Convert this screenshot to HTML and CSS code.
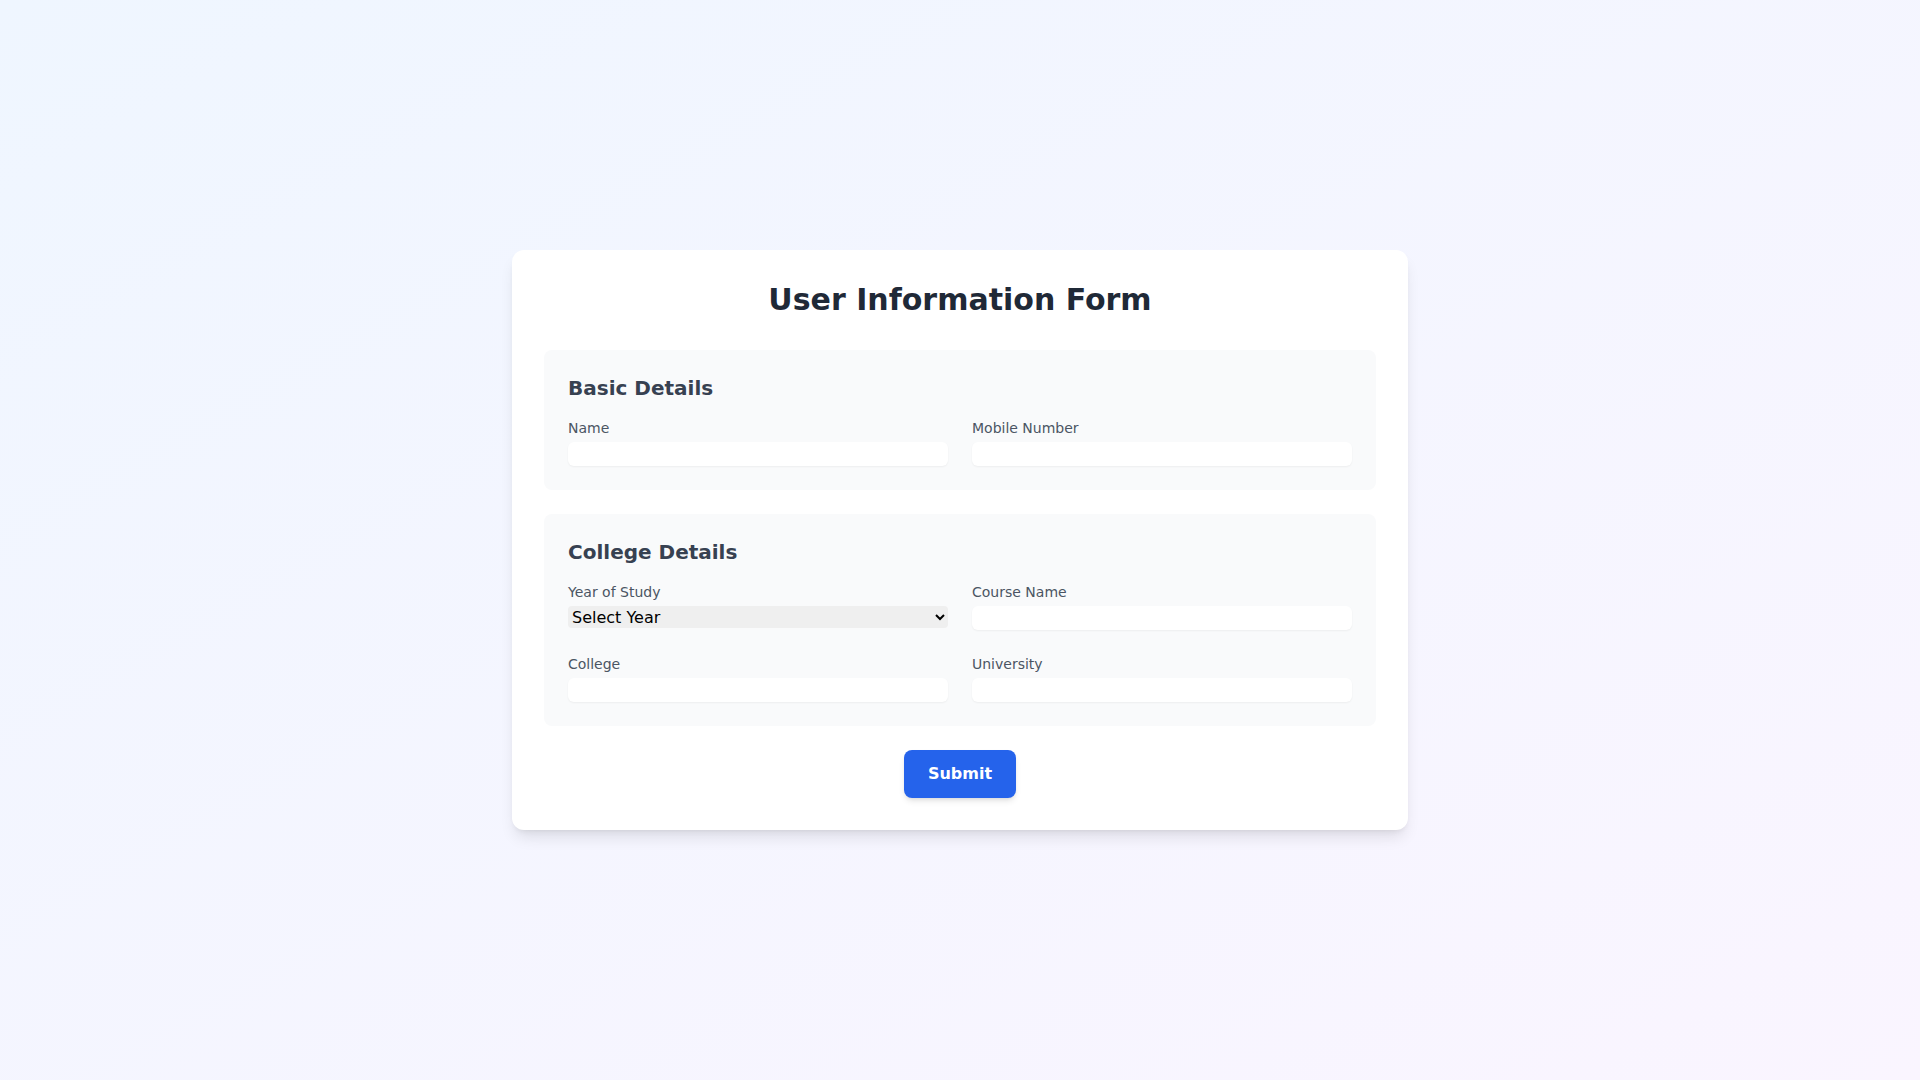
FILE: index.html
```html
<!DOCTYPE html>
<html lang="en">
<head>
<meta charset="utf-8">
<title>User Information Form</title>
<link rel="stylesheet" href="styles.css">
</head>
<body>
<main class="page">
  <form class="card">
    <h1 class="title">User Information Form</h1>
    <section class="section">
      <h2 class="section-title">Basic Details</h2>
      <div class="grid">
        <div class="field">
          <label class="label">Name</label>
          <input class="input" type="text">
        </div>
        <div class="field">
          <label class="label">Mobile Number</label>
          <input class="input" type="text">
        </div>
      </div>
    </section>
    <section class="section">
      <h2 class="section-title">College Details</h2>
      <div class="grid">
        <div class="field">
          <label class="label">Year of Study</label>
          <select class="select">
            <option>Select Year</option>
            <option>1st Year</option>
            <option>2nd Year</option>
            <option>3rd Year</option>
            <option>4th Year</option>
          </select>
        </div>
        <div class="field">
          <label class="label">Course Name</label>
          <input class="input" type="text">
        </div>
        <div class="field">
          <label class="label">College</label>
          <input class="input" type="text">
        </div>
        <div class="field">
          <label class="label">University</label>
          <input class="input" type="text">
        </div>
      </div>
    </section>
    <div class="actions">
      <button class="submit" type="button">Submit</button>
    </div>
  </form>
</main>
</body>
</html>
```
FILE: styles.css
```css
* { box-sizing: border-box; }
html, body {
  margin: 0;
  padding: 0;
}
body {
  font-family: "DejaVu Sans", sans-serif;
  background: linear-gradient(to bottom right, #eff6ff, #faf5ff);
  min-height: 100vh;
}
.page {
  min-height: 100vh;
  display: flex;
  align-items: center;
  justify-content: center;
}
.card {
  width: 896px;
  background: #ffffff;
  border-radius: 12px;
  padding: 32px;
  box-shadow: 0 10px 15px -3px rgba(0,0,0,0.1), 0 4px 6px -4px rgba(0,0,0,0.1);
}
.title {
  margin: 0 0 32px;
  font-size: 30px;
  line-height: 36px;
  font-weight: 700;
  color: #1f2937;
  text-align: center;
}
.section {
  background: #f9fafb;
  border-radius: 8px;
  padding: 24px;
  margin-bottom: 24px;
}
.section-title {
  margin: 0 0 16px;
  font-size: 20px;
  line-height: 28px;
  font-weight: 600;
  color: #374151;
}
.grid {
  display: grid;
  grid-template-columns: 1fr 1fr;
  gap: 24px;
}
.field {
  display: flex;
  flex-direction: column;
}
.label {
  font-size: 14px;
  line-height: 20px;
  color: #4b5563;
  margin-bottom: 4px;
}
.input {
  display: block;
  width: 100%;
  height: 24px;
  margin: 0;
  padding: 0;
  border: none;
  border-radius: 6px;
  background: #ffffff;
  box-shadow: 0 1px 2px 0 rgba(0,0,0,0.05);
  font-family: inherit;
  font-size: 16px;
  line-height: 24px;
  outline: none;
}
.select {
  display: block;
  width: 100%;
  height: 22px;
  margin: 0;
  padding: 0;
  border: none;
  border-radius: 4px;
  background-color: #efefef;
  font-family: inherit;
  font-size: 16px;
  color: #000000;
}
.actions {
  display: flex;
  justify-content: center;
}
.submit {
  background: #2563eb;
  color: #ffffff;
  border: none;
  border-radius: 8px;
  padding: 12px 24px;
  font-family: inherit;
  font-size: 16px;
  line-height: 24px;
  font-weight: 700;
  box-shadow: 0 4px 6px -1px rgba(0,0,0,0.1), 0 2px 4px -2px rgba(0,0,0,0.1);
  cursor: pointer;
}
```
